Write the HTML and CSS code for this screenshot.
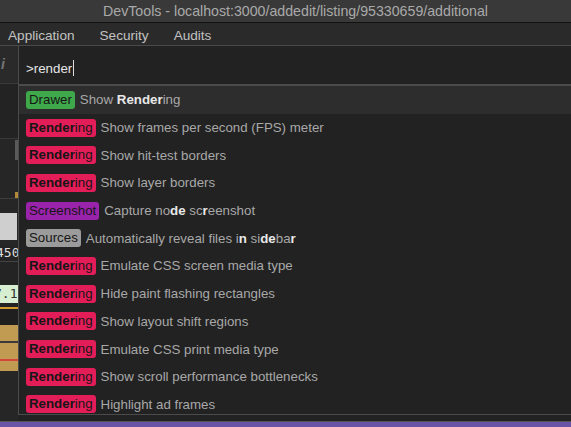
FILE: index.html
```html
<!DOCTYPE html>
<html>
<head>
<meta charset="utf-8">
<link rel="stylesheet" href="styles.css">
</head>
<body>
<div class="window">
  <div class="titlebar">DevTools - localhost:3000/addedit/listing/95330659/additional</div>
  <div class="tabs">
    <span class="tab">Application</span>
    <span class="tab">Security</span>
    <span class="tab">Audits</span>
  </div>
  <div class="main">
    <div class="under">
      <div class="u-top"><span class="u-icon">i</span></div>
      <div class="u-dark1"></div>
      <div class="u-grid"><span class="u-scroll"></span><span class="u-tick"></span></div>
      <div class="u-thumb"><span class="u-thumbimg"></span></div>
      <div class="u-num">450</div>
      <div class="u-green"><span class="u-greenbox">7.1</span></div>
      <div class="u-orange"></div>
      <div class="u-tan"></div>
      <div class="u-tan red"></div>
      <div class="u-tan short"></div>
      <div class="u-rest"></div>
    </div>
    <div class="palette">
      <div class="input">&gt;render<span class="caret"></span></div>
      <div class="list">
        <div class="row sel"><span class="badge drawer">Drawer</span><span class="txt">Show <b>Render</b>ing</span></div>
        <div class="row"><span class="badge rendering"><b>Render</b>ing</span><span class="txt">Show frames per second (FPS) meter</span></div>
        <div class="row"><span class="badge rendering"><b>Render</b>ing</span><span class="txt">Show hit-test borders</span></div>
        <div class="row"><span class="badge rendering"><b>Render</b>ing</span><span class="txt">Show layer borders</span></div>
        <div class="row"><span class="badge screenshot">Screenshot</span><span class="txt">Capture no<b>de</b> sc<b>r</b>eenshot</span></div>
        <div class="row"><span class="badge sources">Sources</span><span class="txt">Automatically reveal files i<b>n</b> si<b>de</b>ba<b>r</b></span></div>
        <div class="row"><span class="badge rendering"><b>Render</b>ing</span><span class="txt">Emulate CSS screen media type</span></div>
        <div class="row"><span class="badge rendering"><b>Render</b>ing</span><span class="txt">Hide paint flashing rectangles</span></div>
        <div class="row"><span class="badge rendering"><b>Render</b>ing</span><span class="txt">Show layout shift regions</span></div>
        <div class="row"><span class="badge rendering"><b>Render</b>ing</span><span class="txt">Emulate CSS print media type</span></div>
        <div class="row"><span class="badge rendering"><b>Render</b>ing</span><span class="txt">Show scroll performance bottlenecks</span></div>
        <div class="row"><span class="badge rendering"><b>Render</b>ing</span><span class="txt">Highlight ad frames</span></div>
      </div>
    </div>
  </div>
  <div class="statusbar"></div>
</div>
</body>
</html>
```
FILE: styles.css
```css
* { box-sizing: border-box; }
html, body { margin: 0; padding: 0; background: #222; }
body { font-family: "Liberation Sans", Arial, sans-serif; font-size: 13px; overflow: hidden; }
.window { width: 571px; height: 427px; display: flex; flex-direction: column; overflow: hidden; }
.titlebar {
  height: 23px; flex: none; background: #393939; color: #a9a9a9;
  text-align: center; line-height: 22px; font-size: 14.2px; padding-left: 20px;
  border-bottom: 1px solid #111;
}
.tabs {
  height: 23px; flex: none; background: #2a2a2a; display: flex; align-items: center;
  border-bottom: 1px solid #4a4a4a; padding: 2px 0 0 8px; color: #c2c2c2; font-size: 13.6px;
}
.tab { margin-right: 25px; }
.main { flex: 1; position: relative; display: flex; }
.under { width: 18px; flex: none; display: flex; flex-direction: column; background: #242424; overflow: hidden; }
.u-top { height: 38px; flex: none; background: #2a2a2a; border-bottom: 1px solid #3a3a3a; color: #777; font-style: italic; font-weight: bold; font-size: 14px; padding: 10px 0 0 1px; }
.u-dark1 { height: 55px; flex: none; background: #232323; border-bottom: 1px solid #3a3a3a; }
.u-grid { height: 60px; flex: none; background: #262626; border-bottom: 1px solid #3d3d3d; display: flex; flex-direction: column; align-items: flex-end; }
.u-scroll { width: 3px; height: 20px; background: #5a5a5a; margin-top: 1px; }
.u-tick { width: 3px; height: 6px; background: #b08a3a; margin-top: auto; }
.u-thumb { height: 46px; flex: none; padding: 14px 0 5px; background: #262626; }
.u-thumbimg { display: block; width: 17px; height: 27px; background: #cfcfcf; }
.u-num { height: 17px; flex: none; color: #ddd; font-family: "DejaVu Sans Mono", monospace; font-size: 13px; line-height: 16px; border-bottom: 1px solid #444; margin-left: -4px; }
.u-green { height: 45px; flex: none; padding-top: 23px; }
.u-greenbox { display: block; height: 18px; background: #d7efd0; color: #333; font-family: "DejaVu Sans Mono", monospace; line-height: 18px; margin-left: -6px; }
.u-orange { height: 18px; flex: none; border-top: 2px solid #d49a2e; background: #1f1f1f; }
.u-tan { height: 18px; flex: none; background: #c19b52; border-bottom: 2px solid #3a3a3a; }
.u-tan.red { border-bottom: 2px solid #d5473d; }
.u-tan.short { height: 10px; border-bottom: 0; }
.u-rest { flex: 1; background: #262626; }

.palette {
  position: absolute; left: 18px; top: 0; width: 560px; bottom: 6px;
  background: #222; border-left: 1px solid #4b4b4b; border-bottom: 1px solid #4b4b4b;
  display: flex; flex-direction: column;
}
.input { height: 40px; flex: none; padding: 14px 0 0 7px; color: #e6e6e6; font-size: 13.3px; border-bottom: 2px solid #4b4b4b; }
.caret { display: inline-block; width: 1px; height: 16px; background: #ddd; vertical-align: -3px; margin-left: 1px; }
.list { display: flex; flex-direction: column; }
.row { height: 27.7px; flex: none; display: flex; align-items: center; padding-left: 7px; color: #a8a8a8; font-size: 13.3px; }
.row.sel { background: #2d2d2d; }
.badge { height: 18px; line-height: 18px; padding: 0 3px; border-radius: 3px; color: #161616; margin-right: 5px; }
.badge b { font-weight: bold; }
.drawer { background: #3ea84a; }
.rendering { background: #e31d58; }
.screenshot { background: #9a23ab; }
.sources { background: #9b9b9b; }
.txt b { color: #e8e8e8; }
.statusbar { height: 6px; flex: none; background: #6a54a8; border-top: 1px solid #555; }
```
